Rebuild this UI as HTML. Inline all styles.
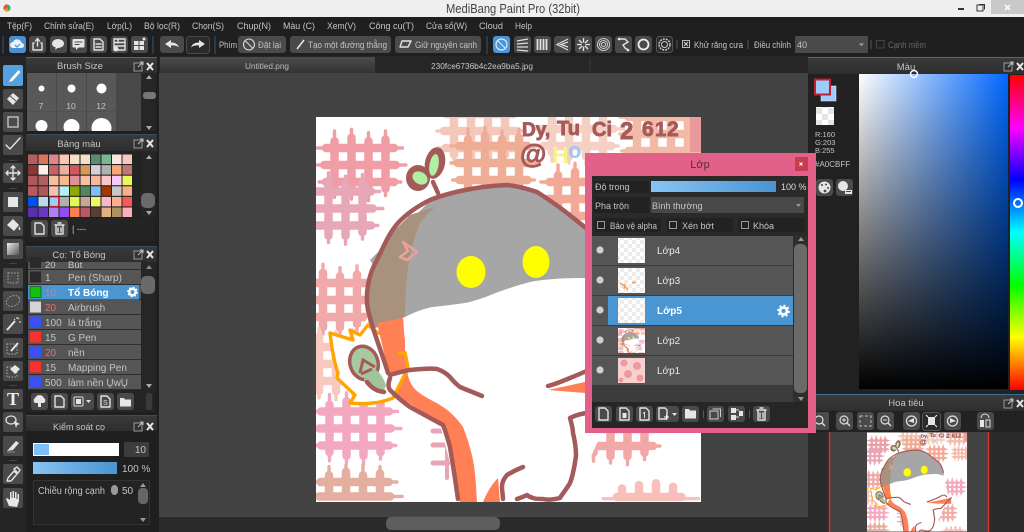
<!DOCTYPE html>
<html lang="vi"><head><meta charset="utf-8"><title>MediBang Paint Pro</title>
<style>
html,body{margin:0;padding:0;background:#1e1e1e;width:1024px;height:532px;overflow:hidden}
svg{display:block;position:absolute;left:0;top:0}
text{font-family:"Liberation Sans",sans-serif;font-size:9.5px;fill:#c4c4c4}
.b{fill:#4a4a4a}.d{fill:#2c2c2c;stroke:#444}
.i{fill:none;stroke:#e2e2e2;stroke-width:1.4;stroke-linejoin:round;stroke-linecap:round}
.f{fill:#e6e6e6}
.c{text-anchor:middle}
.o{fill:none;stroke:#a55a5a;stroke-width:4.5;stroke-linecap:round;stroke-linejoin:round}
.wf{fill:none;stroke-width:10;stroke-linecap:round}
.l{fill:#e8e8e8;font-size:10px}
.h{fill:#a65a5a;stroke:#a65a5a;stroke-width:.9;font-weight:bold}
</style></head><body>
<svg width="1024" height="532" viewBox="0 0 1024 532" xmlns="http://www.w3.org/2000/svg">
<defs>
<linearGradient id="gh" x1="0" y1="0" x2="0" y2="1"><stop offset="0" stop-color="#3a3a3a"/><stop offset="1" stop-color="#2e2e2e"/></linearGradient>
<linearGradient id="gb" x1="0" y1="0" x2="1" y2="0"><stop offset="0" stop-color="#86c4f6"/><stop offset="1" stop-color="#4a94d0"/></linearGradient>
<linearGradient id="gs" x1="0" y1="0" x2="1" y2="0"><stop offset="0" stop-color="#fff"/><stop offset="1" stop-color="#0068ff"/></linearGradient>
<linearGradient id="gk" x1="0" y1="0" x2="0" y2="1"><stop offset="0" stop-color="#000" stop-opacity="0"/><stop offset="1" stop-color="#000"/></linearGradient>
<linearGradient id="gt" x1="0" y1="0" x2="0" y2="1"><stop offset="0" stop-color="#4c4c4c"/><stop offset="1" stop-color="#333"/></linearGradient>
<linearGradient id="gg" x1="0" y1="0" x2="1" y2="1"><stop offset="0" stop-color="#eee"/><stop offset="1" stop-color="#555"/></linearGradient>
<linearGradient id="gu" x1="0" y1="0" x2="0" y2="1">
<stop offset="0" stop-color="#f00"/><stop offset=".167" stop-color="#f0f"/><stop offset=".333" stop-color="#00f"/><stop offset=".5" stop-color="#0ff"/><stop offset=".667" stop-color="#0f0"/><stop offset=".833" stop-color="#ff0"/><stop offset="1" stop-color="#f00"/></linearGradient>
<pattern id="ck" width="12" height="12" patternUnits="userSpaceOnUse"><rect width="12" height="12" fill="#fff"/><rect width="6" height="6" fill="#e4e4e4"/><rect x="6" y="6" width="6" height="6" fill="#e4e4e4"/></pattern>
<pattern id="ck2" width="8" height="8" patternUnits="userSpaceOnUse"><rect width="8" height="8" fill="#fff"/><rect width="4" height="4" fill="#ececec"/><rect x="4" y="4" width="4" height="4" fill="#ececec"/></pattern>
<clipPath id="cc"><rect x="316" y="117" width="385" height="385"/></clipPath>
<clipPath id="cn"><rect x="830" y="432" width="158" height="100"/></clipPath>
<clipPath id="cl"><rect x="28" y="256" width="113" height="134"/></clipPath>
<clipPath id="cz"><rect x="27" y="73" width="114" height="58"/></clipPath>
<g id="w" class="wf"><path d="M20 12V68M40 8V72M60 12V72M80 10V68M10 20H90M8 40H92M10 60H90"/><path stroke-width="4" d="M20 0V78M40 -2V80M60 2V82M80 0V76M0 20H100M0 40H104M2 60H98"/></g>
<g id="w2" class="wf"><path d="M20 12V36M40 8V36M60 12V36M80 10V36M10 20H90M8 37H92"/><path stroke-width="4" d="M20 2V36M40 0V36M60 0V36M80 2V36M0 20H100M0 37H106"/></g>
<g id="w3" class="wf"><path d="M20 10V20M40 6V20M60 4V20M80 8V20M14 20H90"/><path stroke-width="4" d="M-2 22H110"/></g>
<g id="hd"><rect x="1" y="3" width="8" height="8" fill="none" stroke="#9a9a9a"/><path d="M5 7L10 2M7 2h3v3" fill="none" stroke="#bbb"/><path d="M14 3l6 7M20 3l-6 7" stroke="#e8e8e8" stroke-width="2"/></g>
<g id="art" clip-path="url(#cc)">
<rect x="316" y="117" width="385" height="385" fill="#fff"/>
<g opacity=".85">
<use href="#w" transform="translate(437 97) scale(.85)" stroke="#f2bfb0"/>
<use href="#w" transform="translate(535 95) scale(.85)" stroke="#f5c8ba"/>
<use href="#w" transform="translate(451 129) scale(.85)" stroke="#ed9f84"/>
<use href="#w" transform="translate(541 165) scale(.85)" stroke="#f39a85"/>
<use href="#w" transform="translate(620 100) scale(.85)" stroke="#f2ae98"/>
<use href="#w" transform="translate(317.500 131) scale(.85)" stroke="#ee8c96"/>
<use href="#w" transform="translate(294.500 174.500) scale(.85)" stroke="#e598aa"/>
<use href="#w" transform="translate(289 266) scale(.85)" stroke="#ee9a9a"/>
<use href="#w" transform="translate(285 330) scale(.85)" stroke="#f7c0b4"/>
<use href="#w" transform="translate(312.500 394.500) scale(.85)" stroke="#f29ab4"/>
<use href="#w2" transform="translate(312 465) scale(.85)" stroke="#e0a090"/>
<use href="#w" transform="translate(576.500 395) scale(.85)" stroke="#f29a9a"/>
<use href="#w3" transform="translate(605 480) scale(.85)" stroke="#f7b5b0"/>
<use href="#w" transform="translate(610 295) scale(.85)" stroke="#f29ab4"/>
<use href="#w" transform="translate(640 170) scale(.7)" stroke="#f2ae98"/>
</g>
<path d="M433 431H448M433 445H450M433 463H448" stroke="#e9a5b5" stroke-width="5" stroke-linecap="round"/><path d="M447 425V478" stroke="#e9a5b5" stroke-width="4" stroke-linecap="round"/>
<rect x="690" y="117" width="11" height="35" fill="#ea9a9a"/>
<path d="M368 317C365 295 370 275 377 260C385 243 392 232 398 223C410 212 423 203 430 200C445 193 470 187 507 185C520 186 530 189 537 192C550 200 560 207 567 213C580 222 590 230 596 238C604 252 608 262 610 285L630 370L585 470L520 500H460L440 425L385 385L360 330Z" fill="#fff"/>
<path d="M405 317C415 312 422 309 433 307C450 305 460 304 470 302C485 298 497 292 510 288C522 284 532 281 543 280C560 278 575 278 587 278L612 285L608 260C604 248 598 236 590 230C580 220 575 217 567 213C558 206 548 199 537 192C528 188 518 186 507 185C475 187 450 193 430 201L370 260Z" fill="#a6a6a6"/>
<path d="M435 207C428 213 424 218 420 223C414 238 410 252 408 267C406 285 405 300 405 317L370 330C366 310 366 297 368 285L385 240L410 215Z" fill="#a8917d"/>
<path d="M377 323L403 318C404 330 404 335 405 340C405 352 405 360 407 370C408 378 410 382 413 387C422 397 433 400 443 407C452 413 458 420 463 427C468 440 471 450 473 460C476 475 476 490 477 502H460C458 488 456 472 453 460C450 447 447 435 443 425L393 393L388 370Z" fill="#ff8055"/>
<path d="M483 502C487 492 492 484 498 478L500 502Z" fill="#ff8055"/>
<path d="M548 390L585 382L640 370V394L585 393Z" fill="#ff8055"/>
<path d="M330 333L353 340L350 330L360 335L368 325L378 333L390 335L398 353L405 353L408 368L393 398C388 400 382 402 373 403C365 404 360 404 350 403L355 395L337 378L338 373C335 365 332 350 330 333Z" fill="#fff" stroke="#ffa500" stroke-width="3.400" stroke-linejoin="round"/>
<path d="M377 323L403 318C404 330 404 335 405 340C405 352 405 360 407 370L393 375L388 370Z" fill="#ff8055"/>
<path d="M398 353L405 353L408 368" fill="none" stroke="#ffa500" stroke-width="3.400"/>
<ellipse cx="364" cy="363" rx="14" ry="17" fill="#a8c8a0" stroke="#a55a5a" stroke-width="3.500" transform="rotate(-18 364 363)"/>
<path d="M366 370C372 366 380 369 386 385L384 391C376 391 370 386 364 381Z" fill="#a0c49a"/>
<path d="M360 373L363 360L375 367M361 374L372 369" fill="none" stroke="#a55a5a" stroke-width="3"/>
<path d="M367 382C372 388 376 391 384 392" class="o" stroke-width="3.500"/>
<ellipse cx="418" cy="178" rx="12" ry="13" fill="#a55a5a"/>
<ellipse cx="435" cy="163" rx="10" ry="16" fill="#a55a5a" transform="rotate(12 435 163)"/>
<ellipse cx="420" cy="178" rx="8" ry="6" fill="#b0f0a0" transform="rotate(30 420 178)"/>
<ellipse cx="434" cy="165" rx="4.500" ry="11" fill="#b0f0a0" transform="rotate(10 434 165)"/>
<path d="M433 182L438 193" class="o"/>
<path d="M368 310C365 295 368 275 377 260C385 243 390 232 398 223C408 212 420 205 430 200C450 192 480 186 507 185C518 186 528 189 537 192C548 199 558 206 567 213C578 222 590 230 598 240C605 252 608 262 610 272" class="o" stroke-width="5"/>
<path d="M368 310C371 322 374 332 377 340C381 352 385 363 388 373" class="o"/>
<path d="M390 375C397 373 403 371 410 370C420 369 430 368 437 369C443 371 447 374 450 377C453 381 456 384 460 387C467 390 475 393 482 396" class="o"/>
<path d="M390 378C388 384 388 387 390 390C396 396 403 402 410 407L443 425C446 432 448 440 450 447C453 465 456 485 458 499" class="o"/>
<path d="M548 386C556 384 563 381 570 378C580 374 590 370 600 364C610 358 618 360 622 366" class="o"/>
<path d="M640 370L600 412C590 412 580 413 570 418C572 425 573 430 573 433C576 445 576 453 576 456C574 470 572 478 570 483C566 490 562 494 560 498C552 500 547 500 543 499C538 499 535 499 533 498C530 497 528 496 527 495C523 497 520 498 517 499" class="o"/>
<path d="M523 467C518 469 512 472 507 475C503 480 502 483 502 487C502 492 503 495 503 499" class="o"/>
<path d="M403 242L417 252L407 260L400 257L408 251Z" fill="none" stroke="#eba0a0" stroke-width="2.600" stroke-linejoin="round"/>
<ellipse cx="471" cy="272" rx="14.500" ry="16" fill="#ff0"/>
<ellipse cx="536" cy="262" rx="13.500" ry="16" fill="#ff0"/>
<text x="522" y="136" class="h" style="font-size:19px">Dy,</text>
<text x="557" y="135" class="h" style="font-size:20px">Tu</text>
<text x="592" y="136" class="h" style="font-size:20px">Ci</text>
<text x="620" y="139" class="h" style="font-size:24px">2</text>
<text x="642" y="136" class="h" style="font-size:21px">6</text>
<text x="655" y="136" class="h" style="font-size:20px">1</text>
<text x="667" y="136" class="h" style="font-size:21px">2</text>
<text x="520" y="163" class="h" style="font-size:27px">@</text>
<text x="552" y="163" style="font-size:23px;font-weight:bold;fill:#f4f48a">H</text>
<text x="568" y="158" style="font-size:22px;font-weight:bold;fill:#9cc8f8">o</text>
</g>
</defs>

<!-- base -->
<rect width="1024" height="532" fill="#1f1f1f"/>
<!-- title -->
<rect width="1024" height="17" fill="#efefef"/>
<circle cx="7" cy="8" r="3.600" fill="#2bb673"/><path d="M7 4.400A3.600 3.600 0 0 0 4 9.500L7 8Z" fill="#e94e3b"/><path d="M7 8L4 9.500A3.600 3.600 0 0 0 9 11Z" fill="#f39c12"/>
<text x="446" y="13" textLength="134" lengthAdjust="spacingAndGlyphs" style="font-size:12.500px;fill:#444">MediBang Paint Pro (32bit)</text>
<rect x="958" y="8" width="6" height="2" fill="#333"/>
<rect x="977" y="5" width="6" height="6" fill="none" stroke="#333"/><path d="M979 4.500h5.500v5" fill="none" stroke="#333"/>
<rect x="991" y="0" width="33" height="14" fill="#c9c9c9"/><path d="M1005 5l5 5M1010 5l-5 5" stroke="#fff" stroke-width="1.500"/>

<!-- menu -->
<g>
<text x="7" y="29" textLength="25" lengthAdjust="spacingAndGlyphs">Tệp(F)</text><text x="44" y="29" textLength="50" lengthAdjust="spacingAndGlyphs">Chỉnh sửa(E)</text><text x="107" y="29" textLength="25" lengthAdjust="spacingAndGlyphs">Lớp(L)</text><text x="144" y="29" textLength="36" lengthAdjust="spacingAndGlyphs">Bộ lọc(R)</text><text x="192" y="29" textLength="32" lengthAdjust="spacingAndGlyphs">Chọn(S)</text><text x="237" y="29" textLength="34" lengthAdjust="spacingAndGlyphs">Chụp(N)</text><text x="283" y="29" textLength="32" lengthAdjust="spacingAndGlyphs">Màu (C)</text><text x="327" y="29" textLength="29" lengthAdjust="spacingAndGlyphs">Xem(V)</text><text x="369" y="29" textLength="45" lengthAdjust="spacingAndGlyphs">Công cụ(T)</text><text x="426" y="29" textLength="41" lengthAdjust="spacingAndGlyphs">Cửa sổ(W)</text><text x="479" y="29" textLength="24" lengthAdjust="spacingAndGlyphs">Cloud</text><text x="515" y="29" textLength="17" lengthAdjust="spacingAndGlyphs">Help</text>
</g>

<!-- toolbar -->
<path d="M3 36V54M153 36V54M215 36V54M487 36V54" stroke="#2d5a78" stroke-width="1"/>
<rect x="9" y="36" width="17" height="17" rx="3" fill="#4a8fd0"/><path d="M13 48a3 3 0 0 1 0-6a4.500 4.500 0 0 1 8.500 1a2.500 2.500 0 0 1 0 5Z" fill="#e8f2fb"/><path d="M15 45l2 2l3-3" fill="none" stroke="#4a8fd0" stroke-width="1.200"/>
<rect class="b" x="29" y="36" width="17" height="17" rx="3"/><path class="i" d="M34 43h-1v7h9v-7h-1M37.500 46V39M35.500 41l2-2.500l2 2.500"/>
<rect class="b" x="50" y="36" width="17" height="17" rx="3"/><ellipse class="f" cx="58" cy="43.500" rx="6" ry="4.500"/><path class="f" d="M56 47l-1 3l4-3Z"/>
<rect class="b" x="70" y="36" width="17" height="17" rx="3"/><rect class="f" x="72.500" y="39" width="12" height="8.500" rx="1"/><path class="f" d="M76 47v3l3-3Z"/><path d="M74.500 42h8M74.500 44.500h5" stroke="#4a4a4a"/>
<rect class="b" x="90" y="36" width="17" height="17" rx="3"/><path class="i" stroke-width="1" d="M94 39h6l3 3v8h-9ZM96 44h5M96 47h5"/>
<rect class="b" x="111" y="36" width="17" height="17" rx="3"/><path class="i" stroke-width="1" d="M114 39h11v11h-11ZM114 42.500h11M114 46h11M118 39v4"/><circle class="f" cx="116" cy="49" r="2.500"/>
<rect class="b" x="131" y="36" width="17" height="17" rx="3"/><path class="f" d="M134 41h4.500v4h-4.500ZM139.500 41h4.500v4h-4.500ZM134 46h4.500v4h-4.500ZM139.500 46h4.500v4h-4.500Z"/><circle class="f" cx="144" cy="39" r="1.500"/>
<rect class="b" x="160" y="36" width="24" height="17" rx="3"/><path class="f" d="M165 44l6-4v2.500c4 0 7 1.500 8 5c-2-1.800-4.500-2.300-8-2v2.500Z"/>
<rect x="186.500" y="36.500" width="23" height="17" rx="3" fill="#2a2a2a" stroke="#4a4a4a"/><path class="f" d="M205 44l-6-4v2.500c-4 0-7 1.500-8 5c2-1.800 4.500-2.300 8-2v2.500Z"/>
<text x="219" y="48" style="font-size:9px" textLength="18" lengthAdjust="spacingAndGlyphs">Phím</text>
<rect class="b" x="238" y="36" width="48" height="17" rx="3"/><circle cx="249" cy="44.500" r="5.500" fill="none" stroke="#ddd" stroke-width="1.100"/><path d="M245.500 41l7 7" stroke="#ddd"/><text x="258" y="48" style="font-size:9px" textLength="23" lengthAdjust="spacingAndGlyphs">Đặt lại</text>
<rect class="b" x="290" y="36" width="101" height="17" rx="3"/><path d="M297 49l7-9" stroke="#e8e8e8" stroke-width="1.500"/><text x="308" y="48" style="font-size:9.500px" textLength="79" lengthAdjust="spacingAndGlyphs">Tạo một đường thẳng</text>
<rect class="b" x="395" y="36" width="86" height="17" rx="3"/><path class="i" d="M402 41h9l-3 6h-8Z" stroke-width="1.300"/><text x="415" y="48" style="font-size:9.500px" textLength="62" lengthAdjust="spacingAndGlyphs">Giữ nguyên cạnh</text>
<rect x="493" y="36" width="17" height="17" rx="3" fill="#4a96d8"/><circle cx="501.500" cy="44.500" r="5.500" fill="none" stroke="#d6ebfb" stroke-width="1.200"/><path d="M497.500 40.500l8 8" stroke="#d6ebfb"/>
<g>
<rect class="b" x="514" y="36" width="17" height="17" rx="3"/><path d="M517 41l11-2M517 44l11-1M517 47l11 0M517 50l11 1" stroke="#ddd" stroke-width="1.300"/>
<rect class="b" x="534" y="36" width="17" height="17" rx="3"/><path d="M537.500 39v11M540.500 39v11M543.500 39v11M546.500 39v11" stroke="#e2e2e2" stroke-width="1.800"/>
<rect class="b" x="554" y="36" width="17" height="17" rx="3"/><path d="M568 39L557 44.500L568 50M568 42L561 44.500L568 47" fill="none" stroke="#ddd" stroke-width="1.200"/>
<rect class="b" x="575" y="36" width="17" height="17" rx="3"/><path d="M583.500 38v13M577 44.500h13M579 40l9 9M588 40l-9 9" stroke="#e6e6e6" stroke-width="1.300"/><circle cx="583.500" cy="44.500" r="2" fill="#4a4a4a"/>
<rect class="b" x="595" y="36" width="17" height="17" rx="3"/><g fill="none" stroke="#ccc"><circle cx="603.500" cy="44.500" r="6"/><circle cx="603.500" cy="44.500" r="4"/><circle cx="603.500" cy="44.500" r="2"/></g>
<rect class="b" x="615" y="36" width="17" height="17" rx="3"/><path class="i" d="M619 39h6l3 3l-5 3l2 3l3 2" stroke-width="1.500"/><circle class="f" cx="619" cy="39" r="1.300"/><circle class="f" cx="628" cy="50" r="1.300"/>
<rect class="b" x="635" y="36" width="17" height="17" rx="3"/><circle cx="643.500" cy="44.500" r="5" fill="none" stroke="#eee" stroke-width="1.800"/>
<rect x="656.500" y="36.500" width="16" height="16" rx="3" fill="#2a2a2a" stroke="#555"/><circle cx="664.500" cy="44.500" r="5.500" fill="none" stroke="#ccc" stroke-width="1.500" stroke-dasharray="2 1"/><circle cx="664.500" cy="44.500" r="3" fill="none" stroke="#ccc"/>
</g>
<path d="M677 40v9M748 40v9M871 40v9" stroke="#555"/>
<rect x="682.500" y="40.500" width="7" height="7" fill="none" stroke="#bbb"/><path d="M684 42l4 4M688 42l-4 4" stroke="#ddd"/>
<text x="694" y="48" style="font-size:9.500px" textLength="49" lengthAdjust="spacingAndGlyphs">Khử răng cưa</text>
<text x="754" y="48" style="font-size:9.500px" textLength="37" lengthAdjust="spacingAndGlyphs">Điều chỉnh</text>
<rect x="795" y="36" width="73" height="17" rx="1" fill="#4a4a4a"/><text x="797" y="48" style="font-size:9px">40</text><path d="M859 43.500h5l-2.500 2.500Z" fill="#aaa"/>
<rect x="876.500" y="40.500" width="7.500" height="7.500" fill="none" stroke="#444"/>
<text x="888" y="48" style="font-size:9.500px;fill:#666" textLength="38" lengthAdjust="spacingAndGlyphs">Cạnh mềm</text>

<!-- tabs & canvas -->
<rect x="159" y="56" width="650" height="17" fill="#262626"/>
<rect x="160" y="57" width="215" height="16" fill="url(#gt)"/>
<text x="245" y="69" style="font-size:8.500px;fill:#bdbdbd" textLength="44" lengthAdjust="spacingAndGlyphs">Untitled.png</text>
<text x="431" y="69" style="font-size:8.500px;fill:#c8c8c8" textLength="102" lengthAdjust="spacingAndGlyphs">230fce6736b4c2ea9ba5.jpg</text>
<path d="M590 58v14" stroke="#3c3c3c"/>
<rect x="159" y="73" width="650" height="443" fill="#434343"/>
<use href="#art"/>
<rect x="159" y="516" width="650" height="16" fill="#2a2a2a"/><rect x="159" y="516" width="650" height="1" fill="#4a4a4a"/>
<rect x="386" y="517" width="114" height="13" rx="5" fill="#5e5e5e"/>

<!-- tool column -->
<rect x="0" y="56" width="26" height="476" fill="#252525"/>
<g>
<rect x="3" y="65" width="20" height="21" rx="2" fill="#55a0df"/><path d="M7 82c2 0 3-1 3.500-3l8-9l2 2l-8 9c-2 .5-3 1-5.500 1Z" fill="#fff"/>
<rect class="b" x="3" y="89" width="20" height="20" rx="2"/><path d="M7 99l6-6l6 5l-6 7Z" class="f"/><path d="M10 96l6 5" stroke="#4a4a4a"/>
<rect class="b" x="3" y="112" width="20" height="20" rx="2"/><rect x="8" y="117" width="10" height="10" fill="none" stroke="#ccc" stroke-width="1.300"/>
<rect class="b" x="3" y="135" width="20" height="20" rx="2"/><path class="i" stroke-width="1.700" d="M6 145l4 4l10-11"/>
<rect class="b" x="3" y="163" width="20" height="20" rx="2"/><path class="i" d="M13 166v14M6 173h14M11 168l2-2l2 2M11 178l2 2l2-2M8 171l-2 2l2 2M18 171l2 2l-2 2"/>
<rect class="b" x="3" y="192" width="20" height="20" rx="2"/><rect class="f" x="8" y="197" width="10" height="10"/>
<rect class="b" x="3" y="216" width="20" height="20" rx="2"/><path class="f" d="M7 225l6-6l6 6l-5 6Z"/><path d="M19 226c1 2 2 3 1 4c-1 .5-2-.5-1-4Z" fill="#ddd"/>
<rect class="b" x="3" y="239" width="20" height="20" rx="2"/><rect x="7" y="243" width="12" height="12" fill="url(#gg)"/>
<rect class="b" x="3" y="268" width="20" height="20" rx="2"/><rect x="8" y="273" width="10" height="10" fill="none" stroke="#aaa" stroke-dasharray="1.500 1.500"/>
<rect class="b" x="3" y="291" width="20" height="20" rx="2"/><ellipse cx="13" cy="301" rx="7" ry="5" fill="none" stroke="#aaa" stroke-dasharray="1.500 1.500" transform="rotate(-25 13 301)"/>
<rect class="b" x="3" y="314" width="20" height="20" rx="2"/><path d="M7 330l8-9" stroke="#e8e8e8" stroke-width="2"/><path d="M17 317v2M14 319l1 1M19 322h2M18 319l1-1" stroke="#e8e8e8"/>
<rect class="b" x="3" y="338" width="20" height="20" rx="2"/><rect x="7" y="344" width="10" height="10" fill="none" stroke="#aaa" stroke-dasharray="1.500 1.500"/><path d="M11 351l7-8" stroke="#eee" stroke-width="1.800"/>
<rect class="b" x="3" y="361" width="20" height="20" rx="2"/><rect x="7" y="367" width="10" height="10" fill="none" stroke="#aaa" stroke-dasharray="1.500 1.500"/><path class="f" d="M10 369l5-4l5 4l-5 5Z"/>
<rect class="b" x="3" y="389" width="20" height="20" rx="2"/><text x="13" y="405" class="c" style="font-family:'Liberation Serif',serif;font-size:18px;font-weight:bold;fill:#eee">T</text>
<rect class="b" x="3" y="412" width="20" height="20" rx="2"/><ellipse cx="11" cy="420" rx="5" ry="4" fill="none" stroke="#ddd" stroke-width="1.300"/><path class="f" d="M14 421l6 3l-3 1l-1 3Z"/>
<rect class="b" x="3" y="436" width="20" height="20" rx="2"/><path class="f" d="M7 451l9-10l3 2l-6 7Z"/><path d="M7 452h8" stroke="#888"/>
<rect class="b" x="3" y="464" width="20" height="20" rx="2"/><path class="i" stroke-width="1.500" d="M7 481l1-3l6-7l3 3l-6 7ZM14 469l4 4l2-3l-3-3Z"/>
<rect class="b" x="3" y="488" width="20" height="20" rx="2"/><path class="f" d="M9 506l-3-7l1-1l3 2v-8h1.500v6h1v-7h1.500v7h1v-6h1.500v7h1v-5h1.500v7l-2 6Z"/>
</g>
<path d="M9 160.500h8M9 188.500h8M9 263.500h8M9 385.500h8M9 460.500h8" stroke="#444"/>

<!-- left panels -->
<rect x="26" y="56" width="133" height="476" fill="#1f1f1f"/>
<rect x="26" y="57" width="131" height="1" fill="#3b6e8f"/>
<!-- brush size -->
<rect x="26" y="58" width="131" height="15" fill="url(#gh)"/>
<text x="80" y="69" class="c">Brush Size</text><use href="#hd" x="133" y="60"/>
<rect x="27" y="73" width="114" height="58" fill="#484848"/>
<g fill="#585858"><rect x="27" y="73" width="29" height="38.500"/><rect x="57" y="73" width="29" height="38.500"/><rect x="87" y="73" width="29" height="38.500"/><rect x="27" y="112" width="29" height="19"/><rect x="57" y="112" width="29" height="19"/><rect x="87" y="112" width="29" height="19"/></g>
<g fill="#fff" clip-path="url(#cz)"><circle cx="41.500" cy="88.500" r="3"/><circle cx="71.500" cy="88.500" r="4"/><circle cx="101.500" cy="88.500" r="5"/><circle cx="41.500" cy="126" r="6"/><circle cx="71.500" cy="127" r="8"/><circle cx="101.500" cy="128" r="10"/></g>
<text x="41" y="109" class="c" style="font-size:8.500px">7</text><text x="71" y="109" class="c" style="font-size:8.500px">10</text><text x="101" y="109" class="c" style="font-size:8.500px">12</text>
<rect x="141" y="73" width="15" height="58" fill="#262626"/><path d="M146 79l3-4l3 4Z" fill="#aaa"/><path d="M146 126l3 4l3-4Z" fill="#aaa"/><rect x="143" y="92" width="13" height="7" rx="3" fill="#777"/>

<!-- palette -->
<rect x="26" y="134" width="131" height="1" fill="#30505f"/>
<rect x="26" y="135" width="131" height="16" fill="url(#gh)"/>
<text x="79" y="147" class="c">Bảng màu</text><use href="#hd" x="133" y="137"/>
<rect x="27" y="151" width="114" height="66" fill="#232323"/>
<g transform="translate(28 154.500)">
<g><rect x="0" y="0" width="9.500" height="9.500" fill="#b85c64"/><rect x="10.500" y="0" width="9.500" height="9.500" fill="#d8745e"/><rect x="21" y="0" width="9.500" height="9.500" fill="#e0868a"/><rect x="31.500" y="0" width="9.500" height="9.500" fill="#f8c8b0"/><rect x="42" y="0" width="9.500" height="9.500" fill="#f8e0c8"/><rect x="52.500" y="0" width="9.500" height="9.500" fill="#f8e0c8"/><rect x="63" y="0" width="9.500" height="9.500" fill="#5c8c70"/><rect x="73.500" y="0" width="9.500" height="9.500" fill="#78b890"/><rect x="84" y="0" width="9.500" height="9.500" fill="#f8e8e0"/><rect x="94.500" y="0" width="9.500" height="9.500" fill="#f8c8c0"/></g>
<g transform="translate(0 10.600)"><rect x="0" y="0" width="9.500" height="9.500" fill="#883830"/><rect x="10.500" y="0" width="9.500" height="9.500" fill="#fff0e8"/><rect x="21" y="0" width="9.500" height="9.500" fill="#c86068"/><rect x="31.500" y="0" width="9.500" height="9.500" fill="#e8b0a0"/><rect x="42" y="0" width="9.500" height="9.500" fill="#d05860"/><rect x="52.500" y="0" width="9.500" height="9.500" fill="#d89858"/><rect x="63" y="0" width="9.500" height="9.500" fill="#d8d0d8"/><rect x="73.500" y="0" width="9.500" height="9.500" fill="#b0b0b0"/><rect x="84" y="0" width="9.500" height="9.500" fill="#f8a878"/><rect x="94.500" y="0" width="9.500" height="9.500" fill="#c07870"/></g>
<g transform="translate(0 21.200)"><rect x="0" y="0" width="9.500" height="9.500" fill="#b05858"/><rect x="10.500" y="0" width="9.500" height="9.500" fill="#b06060"/><rect x="21" y="0" width="9.500" height="9.500" fill="#f8c0a0"/><rect x="31.500" y="0" width="9.500" height="9.500" fill="#f8b890"/><rect x="42" y="0" width="9.500" height="9.500" fill="#e09098"/><rect x="52.500" y="0" width="9.500" height="9.500" fill="#f8c0a0"/><rect x="63" y="0" width="9.500" height="9.500" fill="#f8b8a0"/><rect x="73.500" y="0" width="9.500" height="9.500" fill="#f8c8c8"/><rect x="84" y="0" width="9.500" height="9.500" fill="#f8c8f8"/><rect x="94.500" y="0" width="9.500" height="9.500" fill="#e8f858"/></g>
<g transform="translate(0 31.800)"><rect x="0" y="0" width="9.500" height="9.500" fill="#b85860"/><rect x="10.500" y="0" width="9.500" height="9.500" fill="#b05858"/><rect x="21" y="0" width="9.500" height="9.500" fill="#f8c0b0"/><rect x="31.500" y="0" width="9.500" height="9.500" fill="#b0f0f8"/><rect x="42" y="0" width="9.500" height="9.500" fill="#90a800"/><rect x="52.500" y="0" width="9.500" height="9.500" fill="#508860"/><rect x="63" y="0" width="9.500" height="9.500" fill="#80c0f8"/><rect x="73.500" y="0" width="9.500" height="9.500" fill="#a03800"/><rect x="84" y="0" width="9.500" height="9.500" fill="#c8c8c8"/><rect x="94.500" y="0" width="9.500" height="9.500" fill="#f8b080"/></g>
<g transform="translate(0 42.400)"><rect x="0" y="0" width="9.500" height="9.500" fill="#0050f0"/><rect x="10.500" y="0" width="9.500" height="9.500" fill="#c0d8e8"/><rect x="21.500" y="0" width="9" height="9.500" fill="#a0cbff" stroke="#d02020"/><rect x="31.500" y="0" width="9.500" height="9.500" fill="#b0b0b0"/><rect x="42" y="0" width="9.500" height="9.500" fill="#e0f858"/><rect x="52.500" y="0" width="9.500" height="9.500" fill="#c8a890"/><rect x="63" y="0" width="9.500" height="9.500" fill="#f0f868"/><rect x="73.500" y="0" width="9.500" height="9.500" fill="#f8b8c8"/><rect x="84" y="0" width="9.500" height="9.500" fill="#f8b090"/><rect x="94.500" y="0" width="9.500" height="9.500" fill="#f85858"/></g>
<g transform="translate(0 53)"><rect x="0" y="0" width="9.500" height="9.500" fill="#5830a8"/><rect x="10.500" y="0" width="9.500" height="9.500" fill="#6838c0"/><rect x="21" y="0" width="9.500" height="9.500" fill="#b080f0"/><rect x="31.500" y="0" width="9.500" height="9.500" fill="#9050f0"/><rect x="42" y="0" width="9.500" height="9.500" fill="#f88050"/><rect x="52.500" y="0" width="9.500" height="9.500" fill="#b85860"/><rect x="63" y="0" width="9.500" height="9.500" fill="#584030"/><rect x="73.500" y="0" width="9.500" height="9.500" fill="#e0b080"/><rect x="84" y="0" width="9.500" height="9.500" fill="#b09060"/><rect x="94.500" y="0" width="9.500" height="9.500" fill="#f8b0b8"/></g>
</g>
<rect x="141" y="151" width="15" height="66" fill="#262626"/><path d="M146 159l3-4l3 4Z" fill="#aaa"/><path d="M146 211l3 4l3-4Z" fill="#aaa"/><rect x="141" y="193" width="14" height="15" rx="5" fill="#6a6a6a"/>
<rect x="27" y="218" width="128" height="23" fill="#242424"/>
<rect class="b" x="31" y="220" width="17" height="17" rx="3"/><path class="i" stroke-width="1" d="M35 223h6l3 3v8h-9Z"/>
<rect class="b" x="51" y="220" width="17" height="17" rx="3"/><path class="i" stroke-width="1.100" d="M55 225h9M56 226v8h7v-8M58 223h3M58 228v4M61 228v4"/>
<text x="72" y="232" style="font-size:9px">| ---</text>

<!-- brushes -->
<rect x="26" y="246" width="131" height="1" fill="#30505f"/>
<rect x="26" y="247" width="131" height="15" fill="url(#gh)"/>
<text x="79" y="258" class="c">Cọ: Tổ Bóng</text><use href="#hd" x="133" y="248"/>
<g clip-path="url(#cl)">
<rect x="28" y="262" width="113" height="128" fill="#555"/>
<path d="M28 269.500H141M28 284.500H141M28 299.500H141M28 314.500H141M28 329.500H141M28 344.500H141M28 359.500H141M28 374.500H141M28 389.500H141" stroke="#2e2e2e"/>
<rect x="28" y="285" width="111" height="14.500" fill="#4a96d2"/>
<rect x="30" y="257" width="11" height="11" fill="#2a2a2a"/><text x="45" y="268">20</text><text x="68" y="268">Bút</text>
<g style="font-size:10px">
<rect x="30" y="271.500" width="11" height="11" fill="#2a2a2a"/><text x="45" y="281" style="font-size:10px">1</text><text x="68" y="281" style="font-size:10px">Pen (Sharp)</text>
<rect x="30" y="286.500" width="11" height="11" fill="#12c012" stroke="#222" stroke-width=".5"/><text x="45" y="296" style="font-size:10px;fill:#ee7777">10</text><text x="68" y="296" style="font-size:10px;font-weight:bold;fill:#fff">Tổ Bóng</text>
<rect x="30" y="301.500" width="11" height="11" fill="#d4d4d4"/><text x="45" y="311" style="font-size:10px;fill:#ee6a6a">20</text><text x="68" y="311" style="font-size:10px">Airbrush</text>
<rect x="30" y="316.500" width="11" height="11" fill="#3a50f8"/><text x="45" y="326" style="font-size:10px">100</text><text x="68" y="326" style="font-size:10px">lá trắng</text>
<rect x="30" y="331.500" width="11" height="11" fill="#f83030"/><text x="45" y="341" style="font-size:10px">15</text><text x="68" y="341" style="font-size:10px">G Pen</text>
<rect x="30" y="346.500" width="11" height="11" fill="#3a50f8"/><text x="45" y="356" style="font-size:10px;fill:#ee6a6a">20</text><text x="68" y="356" style="font-size:10px">nền</text>
<rect x="30" y="361.500" width="11" height="11" fill="#f83030"/><text x="45" y="371" style="font-size:10px">15</text><text x="68" y="371" style="font-size:10px">Mapping Pen</text>
<rect x="30" y="376.500" width="11" height="11" fill="#3a50f8"/><text x="45" y="386" style="font-size:10px">500</text><text x="68" y="386" style="font-size:10px">làm nền ŲwŲ</text>
</g>
</g>
<circle cx="132.500" cy="292" r="3.200" fill="none" stroke="#fff" stroke-width="2.400"/><circle cx="132.500" cy="292" r="4.600" fill="none" stroke="#fff" stroke-width="1.400" stroke-dasharray="1.800 1.800"/>
<rect x="141" y="262" width="15" height="128" fill="#262626"/><path d="M146 269l3-4l3 4Z" fill="#888"/><path d="M146 384l3 4l3-4Z" fill="#aaa"/><rect x="141" y="276" width="14" height="18" rx="5" fill="#6a6a6a"/>
<rect x="27" y="390" width="128" height="22" fill="#252525"/>
<rect class="b" x="31" y="393" width="17" height="17" rx="3"/><path class="f" d="M35 403a3 3 0 0 1 0-5a5 5 0 0 1 9 0a3 3 0 0 1 0 5h-3v4h-3v-4Z"/>
<rect class="b" x="51" y="393" width="17" height="17" rx="3"/><path class="i" stroke-width="1" d="M55 396h6l3 3v8h-9Z"/>
<rect class="b" x="71" y="393" width="23" height="17" rx="3"/><rect x="74" y="397" width="9" height="9" rx="1" fill="none" stroke="#ddd"/><rect class="f" x="76" y="399" width="5" height="5"/><path class="f" d="M86 400h5l-2.500 3Z"/>
<rect class="b" x="97" y="393" width="17" height="17" rx="3"/><path class="i" stroke-width="1" d="M101 396h6l3 3v8h-9Z"/><text x="103" y="405" style="font-size:7px;fill:#ddd">S</text>
<rect class="b" x="117" y="393" width="17" height="17" rx="3"/><path class="f" d="M120 398h4l1 1.500h6v7h-11Z"/>
<rect x="146" y="393" width="6" height="17" rx="2" fill="#3a3a3a"/>

<!-- brush control -->
<rect x="26" y="415" width="131" height="1" fill="#30505f"/>
<rect x="26" y="416" width="131" height="15" fill="url(#gh)"/>
<text x="79" y="430" class="c" style="font-size:9px">Kiểm soát cọ</text><use href="#hd" x="133" y="420"/>
<rect x="33" y="443" width="86" height="13" fill="#fff"/><rect x="34" y="444" width="15" height="11" fill="#7fc0f5"/>
<rect x="124" y="442" width="25" height="15" rx="1" fill="#3c3c3c"/><text x="146" y="453" style="text-anchor:end;font-size:10px">10</text>
<rect x="33" y="462" width="84" height="12" fill="url(#gb)"/><text x="122" y="472" style="font-size:10px">100 %</text>
<rect x="33.500" y="480.500" width="116" height="44" fill="#232323" stroke="#333"/>
<text x="38" y="494" style="font-size:10px" textLength="67" lengthAdjust="spacingAndGlyphs">Chiều rộng cạnh</text>
<rect x="111" y="485" width="7" height="10" rx="4" fill="#999"/>
<text x="122" y="494" style="font-size:10px">50</text>
<path d="M140 487l3-4l3 4Z" fill="#999"/><path d="M140 518l3 4l3-4Z" fill="#999"/><rect x="138" y="488" width="10" height="16" rx="4" fill="#666"/>

<!-- color panel -->
<rect x="808" y="56" width="216" height="476" fill="#212121"/>
<rect x="808" y="57" width="216" height="1" fill="#3b6e8f"/>
<rect x="808" y="58" width="216" height="16" fill="url(#gh)"/>
<text x="906" y="70" class="c">Màu</text><use href="#hd" x="1003" y="60"/>
<rect x="821" y="86" width="15" height="15" fill="#a0cbff" stroke="#eee" stroke-width=".5"/>
<rect x="815" y="79.500" width="15" height="15" fill="#a0cbff" stroke="#c02030" stroke-width="2"/>
<rect x="816" y="107" width="18" height="18" fill="url(#ck)"/>
<g><text x="815" y="137" style="font-size:7.500px">R:160</text><text x="815" y="145" style="font-size:7.500px">G:203</text><text x="815" y="153" style="font-size:7.500px">B:255</text><text x="815" y="167" style="font-size:8px">#A0CBFF</text></g>
<rect class="b" x="816" y="179" width="17" height="17" rx="3"/><circle class="f" cx="824.500" cy="187.500" r="6"/><g fill="#4a4a4a"><circle cx="822" cy="185" r="1"/><circle cx="826" cy="184.500" r="1"/><circle cx="828" cy="188" r="1"/><circle cx="825" cy="191" r="1.400"/></g>
<rect class="b" x="836" y="179" width="17" height="17" rx="3"/><circle class="f" cx="843" cy="186" r="5"/><rect class="f" x="845" y="190" width="7" height="4"/><rect x="846" y="191" width="5" height="1" fill="#4a4a4a"/>
<rect x="859" y="74" width="149" height="315" fill="url(#gs)"/><rect x="859" y="74" width="149" height="315" fill="url(#gk)"/>
<circle cx="914" cy="74" r="3.500" fill="none" stroke="#fff" stroke-width="1.500"/>
<rect x="1010" y="75" width="14" height="315" fill="url(#gu)"/>
<circle cx="1018" cy="203" r="4" fill="none" stroke="#fff" stroke-width="2"/>

<!-- navigator -->
<rect x="808" y="390" width="216" height="142" fill="#222"/>
<rect x="808" y="394" width="216" height="1" fill="#3b6e8f"/>
<rect x="808" y="395" width="216" height="16" fill="url(#gh)"/>
<text x="906" y="406" class="c">Hoa tiêu</text><use href="#hd" x="1003" y="397"/>
<rect x="816" y="412" width="13" height="18" rx="2" fill="#4a4a4a"/><circle cx="819" cy="420" r="4" fill="none" stroke="#ddd" stroke-width="1.200"/><path d="M822 423l3 3" stroke="#ddd" stroke-width="1.500"/>
<rect class="b" x="836" y="412" width="17" height="18" rx="3"/><circle cx="844" cy="420" r="4" fill="none" stroke="#ddd" stroke-width="1.200"/><path d="M847 423l3 3" stroke="#ddd" stroke-width="1.500"/><path d="M842 420h4M844 418v4" stroke="#ddd"/>
<rect class="b" x="857" y="412" width="17" height="18" rx="3"/><rect x="860" y="416" width="11" height="10" fill="none" stroke="#bbb" stroke-dasharray="3 2"/>
<rect class="b" x="877" y="412" width="17" height="18" rx="3"/><circle cx="885" cy="420" r="4" fill="none" stroke="#ddd" stroke-width="1.200"/><path d="M888 423l3 3" stroke="#ddd" stroke-width="1.500"/><path d="M883 420h4" stroke="#ddd"/>
<rect class="b" x="903" y="412" width="17" height="18" rx="3"/><circle cx="911.500" cy="421" r="5" fill="none" stroke="#ddd" stroke-width="1.300"/><path class="f" d="M908 421l6-3v5Z"/>
<rect x="922.500" y="412.500" width="18" height="18" rx="3" fill="#2a2a2a" stroke="#555"/><rect class="f" x="928" y="417" width="7" height="8"/><path d="M926 415l2 2M937 415l-2 2M926 427l2-2M937 427l-2-2" stroke="#eee" stroke-width="1.200"/>
<rect class="b" x="944" y="412" width="17" height="18" rx="3"/><circle cx="952.500" cy="421" r="5" fill="none" stroke="#ddd" stroke-width="1.300"/><path class="f" d="M956 421l-6-3v5Z"/>
<rect class="b" x="977" y="412" width="17" height="18" rx="3"/><rect class="f" x="980" y="420" width="4" height="7"/><rect x="986" y="420" width="4" height="7" fill="none" stroke="#ddd"/><path d="M981 418a4 4 0 0 1 8 0" fill="none" stroke="#ddd"/>
<rect x="808" y="432" width="216" height="100" fill="#2a2a2a"/>
<rect x="829" y="432" width="159" height="100" fill="#434343"/>
<g clip-path="url(#cn)"><use href="#art" transform="translate(867 432.500) scale(.26,.2575) translate(-316 -117)"/></g>
<path d="M829.500 432V532M988.500 432V532" stroke="#d8322a" stroke-width="1.500"/>

<!-- layer window -->
<rect x="585" y="153" width="231" height="280" fill="#e36089"/>
<rect x="592" y="176" width="216" height="252" fill="#2a2a2a"/>
<text x="700" y="168" class="c" style="font-size:11px;fill:#5a2a3c">Lớp</text>
<rect x="795" y="157" width="13" height="14" fill="#c93c50"/><path d="M799.500 162.500l3 3M802.500 162.500l-3 3" stroke="#fff"/>
<rect x="594" y="181" width="55" height="12" fill="#222"/><text x="595" y="190" style="font-size:9px">Độ trong</text>
<rect x="651" y="181" width="125" height="11" fill="url(#gb)"/>
<text x="781" y="190" style="font-size:9px;fill:#ddd">100 %</text>
<rect x="594" y="197" width="55" height="16" fill="#222"/><text x="595" y="209" style="font-size:9px">Pha trộn</text>
<rect x="651" y="197" width="153" height="16" fill="#484848"/><text x="652" y="209" style="font-size:9px">Bình thường</text><path d="M796 204h5l-2.500 3Z" fill="#999"/>
<rect x="595" y="218" width="66" height="14" fill="#222"/><rect x="597.500" y="221.500" width="7" height="7" fill="none" stroke="#999"/><text x="610" y="229" style="font-size:9.500px" textLength="47" lengthAdjust="spacingAndGlyphs">Bảo vệ alpha</text>
<rect x="667" y="218" width="66" height="14" fill="#222"/><rect x="669.500" y="221.500" width="7" height="7" fill="none" stroke="#999"/><text x="682" y="229" style="font-size:9px">Xén bớt</text>
<rect x="738" y="218" width="67" height="14" fill="#222"/><rect x="741.500" y="221.500" width="7" height="7" fill="none" stroke="#999"/><text x="753" y="229" style="font-size:9px">Khóa</text>
<rect x="592" y="236" width="201" height="166" fill="#3c3c3c"/>
<g fill="#555"><rect x="592" y="236" width="201" height="29"/><rect x="592" y="266" width="201" height="29"/><rect x="592" y="296" width="16" height="29"/><rect x="592" y="326" width="201" height="29"/><rect x="592" y="356" width="201" height="29"/></g>
<rect x="608" y="296" width="185" height="29" fill="#4a96d2"/>
<g fill="#cfcfcf"><circle cx="600" cy="250" r="3.600"/><circle cx="600" cy="280" r="3.600"/><circle cx="600" cy="310" r="3.600"/><circle cx="600" cy="340" r="3.600"/><circle cx="600" cy="370" r="3.600"/></g>
<rect x="618" y="238" width="27" height="25" fill="url(#ck2)"/>
<rect x="618" y="268" width="27" height="25" fill="url(#ck2)"/><path d="M620 283l5 3l3 4M625 284l-1 5M632 283l4-1" stroke="#f0a060" stroke-width="1.500" fill="none"/>
<rect x="618" y="298" width="27" height="25" fill="url(#ck2)"/>
<g transform="translate(618 328) scale(.0701,.0649) translate(-316 -117)"><use href="#art"/></g>
<rect x="618" y="358" width="27" height="25" fill="#f8d0d0"/><g fill="#ef9aa0"><circle cx="624" cy="363" r="3.500"/><circle cx="637" cy="366" r="4"/><circle cx="628" cy="374" r="4"/><circle cx="640" cy="378" r="3.500"/><circle cx="621" cy="380" r="2.500"/></g>
<text x="657" y="254" class="l">Lớp4</text><text x="657" y="284" class="l">Lớp3</text><text x="657" y="314" class="l" style="font-weight:bold;fill:#fff">Lớp5</text><text x="657" y="344" class="l">Lớp2</text><text x="657" y="374" class="l">Lớp1</text>
<circle cx="783.500" cy="311" r="3.500" fill="none" stroke="#fff" stroke-width="2.800"/><circle cx="783.500" cy="311" r="5.500" fill="none" stroke="#fff" stroke-width="1.800" stroke-dasharray="2 2.300"/>
<rect x="793" y="236" width="15" height="166" fill="#2e2e2e"/><path d="M798 241l3-4l3 4Z" fill="#999"/><path d="M798 397l3 4l3-4Z" fill="#999"/>
<rect x="794" y="244" width="13" height="149" rx="5" fill="#6a6a6a"/>
<rect x="592" y="402" width="216" height="26" fill="#262626"/>
<g>
<rect class="b" x="595" y="406" width="17" height="16" rx="3"/><path class="i" stroke-width="1" d="M599 408h6l3 3v9h-9Z"/>
<rect class="b" x="616" y="406" width="17" height="16" rx="3"/><path class="i" stroke-width="1" d="M620 408h6l3 3v9h-9Z"/><rect class="f" x="622.500" y="413" width="4" height="5"/>
<rect class="b" x="636" y="406" width="17" height="16" rx="3"/><path class="i" stroke-width="1" d="M640 408h6l3 3v9h-9Z"/><path d="M644.500 412v6M643 413.500l1.500-1.500" stroke="#ddd"/>
<rect class="b" x="656" y="406" width="23" height="16" rx="3"/><path class="i" stroke-width="1" d="M659 408h6l2 2v9h-8Z"/><path d="M664 417h5M666.500 414.500v5" stroke="#fff"/><path class="f" d="M672 413h5l-2.500 3Z"/>
<rect class="b" x="682" y="406" width="17" height="16" rx="3"/><path class="f" d="M685 409h4l1 1.500h6v8h-11Z"/>
<path d="M703.500 410v8" stroke="#555"/>
<rect class="b" x="707" y="406" width="17" height="16" rx="3"/><rect x="710" y="411" width="8" height="8" fill="none" stroke="#ccc"/><path d="M712.500 409h8v8" fill="none" stroke="#ccc"/>
<rect class="b" x="728" y="406" width="17" height="16" rx="3"/><rect class="f" x="731" y="408" width="5" height="5"/><rect class="f" x="731" y="415" width="5" height="5"/><rect class="f" x="739" y="411" width="4" height="5"/><path d="M736 410h3M736 417h3" stroke="#ddd"/>
<path d="M749.500 410v8" stroke="#555"/>
<rect class="b" x="753" y="406" width="17" height="16" rx="3"/><path class="i" stroke-width="1.100" d="M757 410h9M758 411v9h7v-9M760 408h3M760 413v5M763 413v5"/>
</g>
</svg>
</body></html>
